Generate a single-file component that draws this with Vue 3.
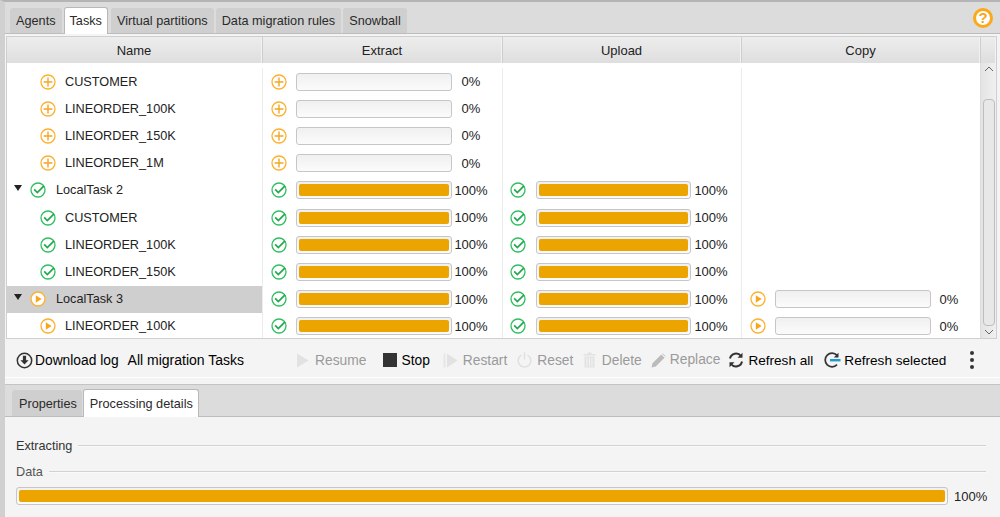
<template>
  <div class="app">
    <svg class="defs" width="0" height="0">
      <symbol id="i-plus" viewBox="0 0 16 16">
        <circle cx="8" cy="8" r="7" fill="#fff" stroke="#fdb02e" stroke-width="1.3" />
        <path d="M8 3.600v8.800M3.600 8h8.800" stroke="#f5a623" stroke-width="1.400" fill="none" />
      </symbol>
      <symbol id="i-ok" viewBox="0 0 16 16">
        <circle cx="8" cy="8" r="7" fill="#fff" stroke="#2fbf5f" stroke-width="1.3" />
        <path d="M4.200 7.400 7.300 10.600 14 3.800" stroke="#22a94f" stroke-width="1.700" fill="none" />
      </symbol>
      <symbol id="i-play" viewBox="0 0 16 16">
        <circle cx="8" cy="8" r="7" fill="#fff" stroke="#fdb02e" stroke-width="1.3" />
        <path d="M5.800 4.200v7.600L11.600 8z" fill="#f9a51e" />
      </symbol>
    </svg>

    <div class="tabbar top">
      <div v-for="t in topTabs" :key="t" class="tab" :class="{ active: t === 'Tasks' }">{{ t }}</div>
      <svg class="help" width="20" height="20" viewBox="0 0 20 20">
        <circle cx="10" cy="10" r="8.500" fill="#fff" stroke="#fba919" stroke-width="3" />
        <text x="10" y="15" text-anchor="middle" class="help-q">?</text>
      </svg>
    </div>

    <div class="table">
      <div class="thead">
        <div class="th name">Name</div>
        <div class="th col">Extract</div>
        <div class="th col narrow">Upload</div>
        <div class="th col narrow">Copy</div>
        <div class="th corner"></div>
      </div>
      <div class="tbody">
        <div class="rows">
          <div v-for="(r, i) in rows" :key="i" class="row">
            <div class="cell name" :class="{ selected: r.selected, parent: r.parent }">
              <span v-if="r.parent" class="caret"></span>
              <svg class="ic"><use :href="'#i-' + r.icon" /></svg>
              <span class="label">{{ r.name }}</span>
            </div>
            <div v-for="(c, j) in r.cols" :key="j" class="cell col">
              <template v-if="c">
                <svg class="ic"><use :href="'#i-' + c.icon" /></svg>
                <div class="bar"><div class="fill" :style="{ width: c.pct + '%' }"></div></div>
                <span class="pct">{{ c.pct }}%</span>
              </template>
            </div>
          </div>
        </div>
        <div class="scroll">
          <svg class="arrow" width="12" height="8" viewBox="0 0 12 8"><path d="M2 6l4-4 4 4" fill="none" stroke="#666" /></svg>
          <div class="track"><div class="thumb"></div></div>
          <svg class="arrow" width="12" height="8" viewBox="0 0 12 8"><path d="M2 2l4 4 4-4" fill="none" stroke="#666" /></svg>
        </div>
      </div>
    </div>

    <div class="toolbar">
      <div class="btn first">
        <svg width="17" height="17" viewBox="0 0 17 17">
          <circle cx="8.500" cy="8.500" r="7.200" fill="none" stroke="#333" stroke-width="1.500" />
          <path d="M6.900 3.800h3.200v4.400h2.500L8.500 12.600 4.400 8.200h2.500z" fill="#333" />
        </svg>
        <span>Download log</span>
      </div>
      <div class="scope">All migration Tasks</div>
      <div class="btn off resume">
        <svg width="13" height="15" viewBox="0 0 13 15"><path d="M1 0.500v14L12.500 7.500z" fill="#e2e2e2" /></svg>
        <span>Resume</span>
      </div>
      <div class="btn stop">
        <svg width="14" height="14" viewBox="0 0 14 14"><rect width="14" height="14" fill="#333" /></svg>
        <span>Stop</span>
      </div>
      <div class="btn off restart">
        <svg width="15" height="15" viewBox="0 0 15 15">
          <path d="M0.500 0.500h2v14h-2z" fill="#e6e6e6" /><path d="M4 0.500v14L14.500 7.500z" fill="#e2e2e2" />
        </svg>
        <span>Restart</span>
      </div>
      <div class="btn off reset">
        <svg width="15" height="16" viewBox="0 0 15 16">
          <path d="M4.500 3.200a6.300 6.300 0 1 0 6 0" fill="none" stroke="#e0e0e0" stroke-width="1.500" />
          <path d="M7.500 0.500v7" stroke="#e0e0e0" stroke-width="1.500" />
        </svg>
        <span>Reset</span>
      </div>
      <div class="btn off del">
        <svg width="13" height="16" viewBox="0 0 13 16">
          <path d="M0.500 2h12v1.500h-12zM4.500 0.500h4V2h-4z" fill="#e2e2e2" />
          <path d="M1.500 4.500h10V15.500h-10z" fill="#e2e2e2" />
          <path d="M4 5.500v9M6.500 5.500v9M9 5.500v9" stroke="#f4f4f4" />
        </svg>
        <span>Delete</span>
      </div>
      <div class="btn off replace">
        <svg width="15" height="15" viewBox="0 0 15 15">
          <path d="M0.500 14.500l1-4.200L10.300 1.500l3.200 3.200-8.800 8.800zM11.200 0.700l0.700-0.200 2.600 2.600-0.200 0.700z" fill="#bbb" />
        </svg>
        <span class="up">Replace</span>
      </div>
      <div class="btn refresh-all">
        <svg width="16" height="16" viewBox="0 0 16 16">
          <path d="M2 6.500A6.200 6.200 0 0 1 13 4" fill="none" stroke="#333" stroke-width="2" />
          <path d="M14.500 0.800v5h-5z" fill="#333" />
          <path d="M14 9.500A6.200 6.200 0 0 1 3 12" fill="none" stroke="#333" stroke-width="2" />
          <path d="M1.500 15.200v-5h5z" fill="#333" />
        </svg>
        <span>Refresh all</span>
      </div>
      <div class="btn refresh-sel">
        <svg width="17" height="16" viewBox="0 0 17 16">
          <path d="M13 3.400A6.800 6.800 0 1 0 13 12.600" fill="none" stroke="#333" stroke-width="1.700" />
          <path d="M14.500 0.800v4.700h-4.700z" fill="#333" />
          <path d="M6 7h10.500v2.400H6z" fill="#1d9bd1" />
        </svg>
        <span>Refresh selected</span>
      </div>
      <div class="more"><i></i><i></i><i></i></div>
    </div>

    <div class="panel">
      <div class="tabbar bottom">
        <div class="tab">Properties</div>
        <div class="tab active">Processing details</div>
      </div>
      <div class="details">
        <div class="legend">Extracting</div>
        <div class="legend sub">Data</div>
        <div class="wide">
          <div class="bar"><div class="fill full"></div></div>
          <span class="pct">100%</span>
        </div>
      </div>
    </div>
  </div>
</template>

<script setup>
const topTabs = ['Agents', 'Tasks', 'Virtual partitions', 'Data migration rules', 'Snowball']

const cell = (icon, pct) => ({ icon, pct })
const plus = [cell('plus', 0), null, null]
const done = [cell('ok', 100), cell('ok', 100), null]
const running = [cell('ok', 100), cell('ok', 100), cell('play', 0)]

const rows = [
  { name: 'CUSTOMER', icon: 'plus', cols: plus },
  { name: 'LINEORDER_100K', icon: 'plus', cols: plus },
  { name: 'LINEORDER_150K', icon: 'plus', cols: plus },
  { name: 'LINEORDER_1M', icon: 'plus', cols: plus },
  { name: 'LocalTask 2', icon: 'ok', parent: true, cols: done },
  { name: 'CUSTOMER', icon: 'ok', cols: done },
  { name: 'LINEORDER_100K', icon: 'ok', cols: done },
  { name: 'LINEORDER_150K', icon: 'ok', cols: done },
  { name: 'LocalTask 3', icon: 'play', parent: true, selected: true, cols: running },
  { name: 'LINEORDER_100K', icon: 'play', cols: running }
]
</script>

<style>
html, body { margin: 0; background: #f4f4f4; }
</style>

<style scoped>
.app {
  width: 1000px;
  height: 517px;
  overflow: hidden;
  box-sizing: border-box;
  background: #f4f4f4;
  border-top: 2px solid #b4b4b4;
  border-left: 5px solid #d0d0d0;
  font-family: "Liberation Sans", Arial, sans-serif;
  font-size: 12.7px;
  color: #222;
  display: flex;
  flex-direction: column;
}
.defs { position: absolute; }

.tabbar {
  display: flex;
  align-items: flex-end;
  gap: 2px;
  background: #dcdcdc;
  border-bottom: 1px solid #bcbcbc;
  box-sizing: border-box;
  flex: none;
  position: relative;
}
.tabbar.top { height: 32px; padding-left: 5px; }
.tabbar.bottom { height: 32px; padding-left: 7px; }
.tab {
  height: 25px;
  line-height: 27px;
  padding: 0 6px;
  background: #cfcfcf;
  border-radius: 3px 3px 0 0;
  color: #2a2a2a;
  white-space: nowrap;
}
.tab.active {
  background: #fff;
  border: 1px solid #b8b8b8;
  border-bottom: none;
  padding: 0 5px;
  margin: 0 1px -1px 0;
  height: 26px;
}
.bottom .tab { height: 26px; line-height: 29px; padding: 0 5px 0 7px; }
.bottom .tab.active { height: 27px; margin-left: -1px; padding: 0 5px 0 6px; }
.help { position: absolute; right: 7px; top: 6px; }
.help-q { font: bold 15px "Liberation Sans", Arial, sans-serif; fill: #f9a51e; }

.table {
  margin: 2px 3px 0 1px;
  border: 1px solid #cfcfcf;
  flex: none;
  height: 303px;
  box-sizing: border-box;
  background: #fff;
}
.thead {
  display: flex;
  height: 26px;
  background: linear-gradient(#ededed, #dedede);
}
.th {
  box-sizing: border-box;
  text-align: center;
  line-height: 28px;
  font-size: 13px;
  border-right: 1px solid #f2f2f2;
  border-left: 1px solid #cdcdcd;
}
.th.name { width: 255px; border-left: none; }
.th.col { width: 240px; }
.th.narrow { width: 239px; }
.th.corner { flex: 1; }

.tbody { display: flex; height: 275px; overflow: hidden; }
.rows { width: 973px; padding-top: 5px; flex: none; }
.row { display: flex; height: 27.2px; }
.cell {
  box-sizing: border-box;
  display: flex;
  align-items: center;
  white-space: nowrap;
}
.cell.name { width: 255px; padding-left: 33px; }
.cell.name.parent { padding-left: 7px; }
.cell.name.selected { background: #cfcfcf; }
.cell.col { width: 239px; padding-left: 8px; border-left: 1px solid #ececec; }
.cell.col:nth-child(2) { width: 240px; }
.cell.col:nth-child(3) { padding-left: 7px; }
.ic { width: 16px; height: 16px; flex: none; }
.label { margin-left: 9px; }
.parent .label { margin-left: 10px; }
.caret {
  width: 0;
  height: 0;
  border-left: 4.500px solid transparent;
  border-right: 4.500px solid transparent;
  border-top: 6px solid #222;
  margin-right: 8px;
  margin-top: -5px;
}
.bar {
  box-sizing: border-box;
  width: 156px;
  height: 18px;
  margin-left: 9px;
  border: 1px solid #c6c6c6;
  border-radius: 3px;
  padding: 2px;
  background: linear-gradient(#f0f0f0, #fbfbfb);
  flex: none;
}
.cell.col:nth-child(3) .bar { width: 155px; margin-left: 10px; }
.fill { height: 100%; background: #eca400; border-radius: 2px; }
.pct { margin-left: 6px; font-size: 13px; }
.cell.col .pct { width: 36px; text-align: center; margin-left: 1px; }
.cell.col:nth-child(3) .pct { margin-left: 2px; }
.cell.col:nth-child(4) .pct { margin-left: 0; }

.scroll {
  flex: 1;
  display: flex;
  flex-direction: column;
  align-items: center;
  background: linear-gradient(90deg, #e4e4e4, #f0f0f0);
  border-left: 1px solid #dcdcdc;
}
.arrow { flex: none; margin: 2px 0; }
.track { flex: 1; width: 100%; padding-top: 24px; box-sizing: border-box; }
.thumb {
  box-sizing: border-box;
  width: 12px;
  height: 227px;
  margin: 0 auto;
  border: 1px solid #bdbdbd;
  border-radius: 4px;
  background: #e8e8e8;
}

.toolbar {
  display: flex;
  align-items: center;
  height: 39px;
  flex: none;
  font-size: 13.8px;
  border-bottom: 1px solid #fff;
  box-sizing: border-box;
  padding: 4px 0 0 11px;
  color: #000;
}
.btn { display: flex; align-items: center; gap: 4px; white-space: nowrap; }
.btn.off { color: #9a9a9a; }
.first { gap: 2px; }
.scope { margin-left: 9px; white-space: nowrap; font-size: 14px; }
.resume { margin-left: 52px; gap: 6px; }
.stop { margin-left: 17px; gap: 4px; }
.restart { margin-left: 13px; gap: 5px; }
.reset { margin-left: 10px; gap: 5px; }
.del { margin-left: 9.500px; gap: 6px; }
.replace { margin-left: 9px; }
.up { margin-top: -2px; }
.refresh-all { margin-left: 8px; font-size: 13.600px; }
.refresh-sel { margin-left: 11px; gap: 3px; font-size: 13.600px; }
.more {
  margin-left: 24px;
  margin-top: -1px;
  display: flex;
  flex-direction: column;
  gap: 3px;
}
.more i { width: 4px; height: 4px; border-radius: 50%; background: #333; display: block; }

.panel {
  flex: 1;
  margin-top: 6px;
  border-top: 1px solid #c4c4c4;
  display: flex;
  flex-direction: column;
}
.details { padding: 21px 14px 0 11px; }
.legend {
  display: flex;
  align-items: center;
  gap: 6px;
  height: 16px;
  color: #333;
}
.legend::after {
  content: "";
  flex: 1;
  border-top: 1px solid #d2d2d2;
  border-bottom: 1px solid #fafafa;
}
.legend.sub { margin-top: 10px; color: #555; }
.wide { display: flex; align-items: center; margin-top: 7px; }
.wide .bar { width: 932px; height: 18px; margin-left: 0; }
.fill.full { width: 100%; }
</style>
